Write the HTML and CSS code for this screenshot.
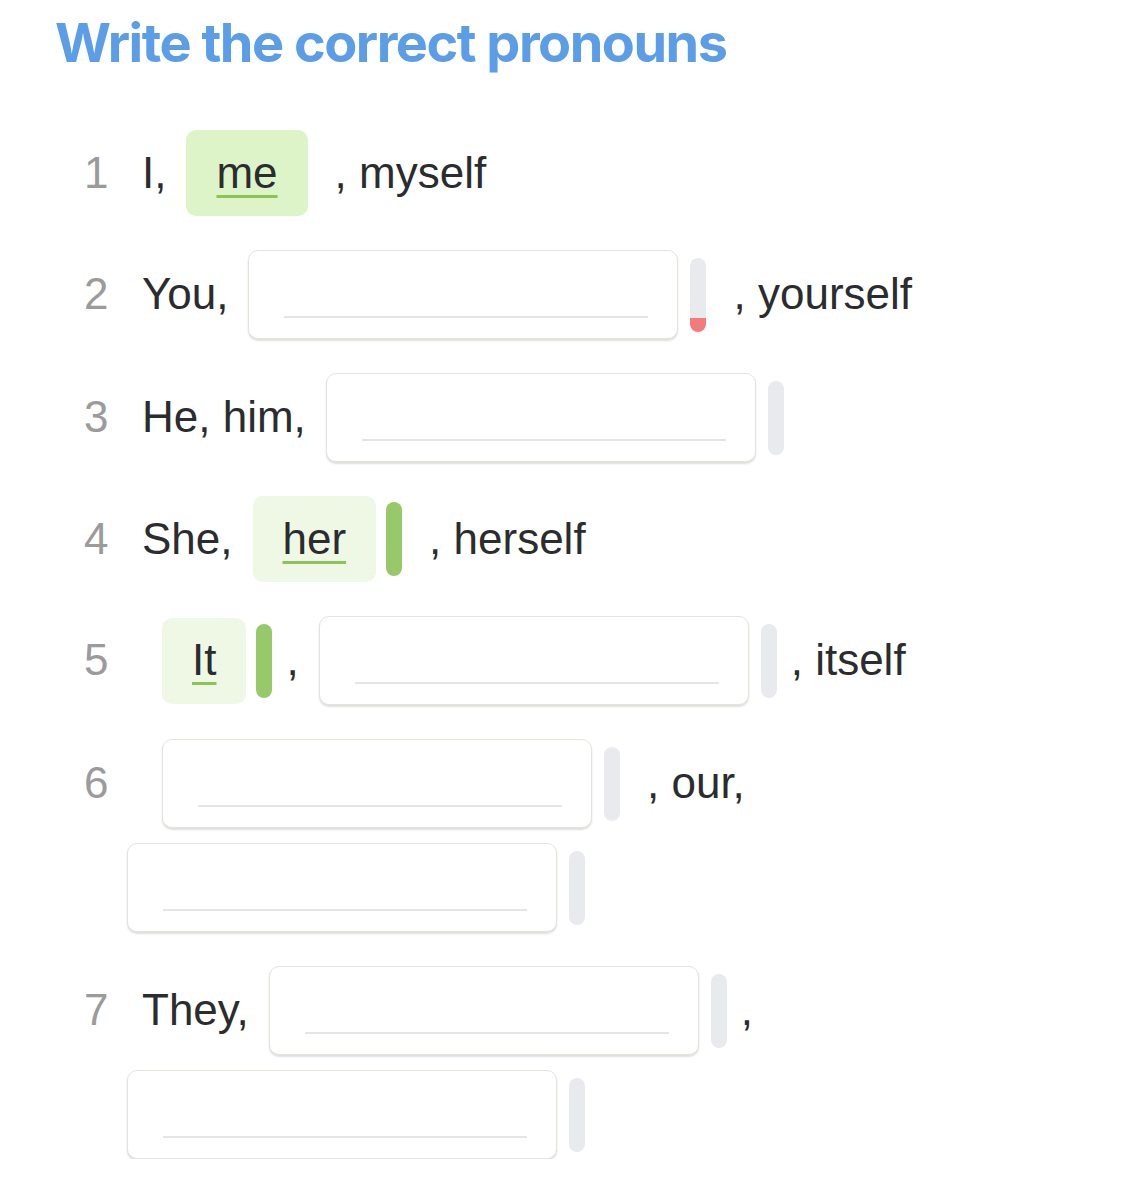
FILE: index.html
```html
<!DOCTYPE html>
<html lang="en">
<head>
<meta charset="utf-8">
<title>Write the correct pronouns</title>
<link rel="stylesheet" href="styles.css">
</head>
<body>
<main class="page">
  <h1 class="title">Write the correct pronouns</h1>
  <ol class="list">
    <li class="item">
      <span class="num">1</span>
      <span class="txt">I,</span>
      <span class="slot"><span class="answer answer--focus">me</span></span>
      <span class="txt txt--space">, myself</span>
    </li>
    <li class="item">
      <span class="num">2</span>
      <span class="txt">You,</span>
      <span class="slot"><span class="field"><span class="line"></span></span><span class="meter meter--wrong"></span></span>
      <span class="txt txt--space">, yourself</span>
    </li>
    <li class="item">
      <span class="num">3</span>
      <span class="txt">He, him,</span>
      <span class="slot"><span class="field"><span class="line"></span></span><span class="meter"></span></span>
    </li>
    <li class="item">
      <span class="num">4</span>
      <span class="txt">She,</span>
      <span class="slot"><span class="answer">her</span><span class="meter meter--ok"></span></span>
      <span class="txt txt--space">, herself</span>
    </li>
    <li class="item">
      <span class="num">5</span>
      <span class="slot"><span class="answer">It</span><span class="meter meter--ok"></span></span>
      <span class="txt">,</span>
      <span class="slot"><span class="field"><span class="line"></span></span><span class="meter"></span></span>
      <span class="txt">, itself</span>
    </li>
    <li class="item">
      <span class="num">6</span>
      <span class="slot"><span class="field"><span class="line"></span></span><span class="meter"></span></span>
      <span class="txt txt--space">, our,</span>
      <span class="slot"><span class="field"><span class="line"></span></span><span class="meter"></span></span>
    </li>
    <li class="item">
      <span class="num">7</span>
      <span class="txt">They,</span>
      <span class="slot"><span class="field"><span class="line"></span></span><span class="meter"></span></span>
      <span class="txt">,</span>
      <span class="slot"><span class="field"><span class="line"></span></span><span class="meter"></span></span>
    </li>
  </ol>
</main>
</body>
</html>
```
FILE: styles.css
```css
html, body {
  margin: 0;
  padding: 0;
  background: #ffffff;
}

.page {
  font-family: "Liberation Sans", Arial, sans-serif;
  color: #2a2c2e;
}

.title {
  margin: 16px 0 0 55px;
  font-family: Inter, "Liberation Sans", sans-serif;
  font-weight: 700;
  font-size: 54px;
  line-height: 1;
  letter-spacing: -1.5px;
  color: #5c9de8;
}

.list {
  list-style: none;
  margin: 60px 0 0;
  padding: 0;
  display: flex;
  flex-direction: column;
  gap: 34px;
}

.item {
  display: flex;
  flex-wrap: wrap;
  align-items: center;
  row-gap: 15px;
  padding-left: 107px;
  font-size: 44px;
  line-height: 1.2;
}

.num {
  margin-left: -23px;
  width: 58px;
  color: #9b9b9b;
}

.txt {
  white-space: pre;
}

.txt--space {
  margin-left: 27px;
}

.slot + .txt {
  margin-left: 14px;
}

.slot + .txt--space {
  margin-left: 27px;
}

.slot {
  display: flex;
  align-items: center;
  gap: 12px;
  margin-left: 20px;
}

.answer {
  display: flex;
  align-items: center;
  height: 86px;
  padding: 0 30px;
  box-sizing: border-box;
  border-radius: 10px;
  background: #eef8e4;
  text-decoration: underline;
  text-decoration-color: #8dc45a;
  text-decoration-thickness: 3px;
  text-underline-offset: 7px;
}

.answer + .meter {
  margin-left: -2px;
}

.answer--focus {
  background: #ddf4c8;
}

.field {
  display: flex;
  align-items: flex-end;
  width: 430px;
  height: 89px;
  box-sizing: border-box;
  padding: 0 29px 20px 35px;
  border: 1.5px solid #e0e6d9;
  border-radius: 10px;
  background: #ffffff;
  box-shadow: 0 2px 2px rgba(0, 0, 0, 0.13);
}

.line {
  flex: 1;
  height: 2px;
  background: #e4e5e6;
}

.meter {
  width: 16px;
  height: 74px;
  border-radius: 8px;
  background: #e8eaed;
}

.meter--wrong {
  background: linear-gradient(to bottom, #e8eaed 0, #e8eaed 60px, #f27c7c 60px, #f27c7c 100%);
}

.meter--ok {
  background: #97c86a;
}
```
